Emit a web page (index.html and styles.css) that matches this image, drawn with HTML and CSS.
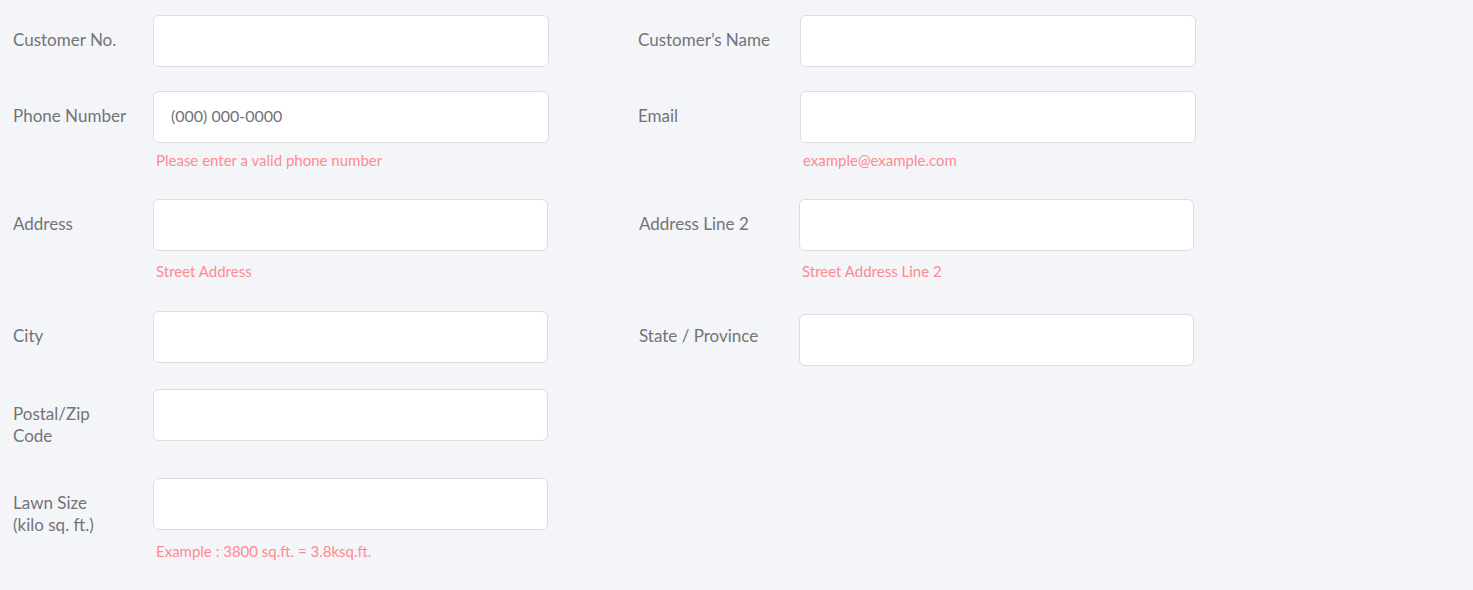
FILE: index.html
```html
<!DOCTYPE html>
<html lang="en">
<head>
<meta charset="utf-8">
<title>Customer Form</title>
<link rel="stylesheet" href="styles.css">
</head>
<body>
<form class="form">
  <div class="col col-left">
    <div class="field mb-24">
      <label class="label">Customer No.</label>
      <div class="control"><input class="input" type="text"></div>
    </div>
    <div class="field mb-30">
      <label class="label">Phone Number</label>
      <div class="control">
        <input class="input" type="text" placeholder="(000) 000-0000">
        <div class="helper h-8">Please enter a valid phone number</div>
      </div>
    </div>
    <div class="field mb-31 narrow">
      <label class="label">Address</label>
      <div class="control">
        <input class="input" type="text">
        <div class="helper h-11">Street Address</div>
      </div>
    </div>
    <div class="field mb-26 narrow">
      <label class="label">City</label>
      <div class="control"><input class="input" type="text"></div>
    </div>
    <div class="field mb-31 narrow">
      <label class="label">Postal/Zip<br>Code</label>
      <div class="control"><input class="input" type="text"></div>
    </div>
    <div class="field narrow">
      <label class="label">Lawn Size<br>(kilo sq. ft.)</label>
      <div class="control">
        <input class="input" type="text">
        <div class="helper h-12">Example : 3800 sq.ft. = 3.8ksq.ft.</div>
      </div>
    </div>
  </div>
  <div class="col col-right">
    <div class="field mb-24">
      <label class="label">Customer’s Name</label>
      <div class="control"><input class="input" type="text"></div>
    </div>
    <div class="field mb-30">
      <label class="label">Email</label>
      <div class="control">
        <input class="input" type="email">
        <div class="helper h-8">example@example.com</div>
      </div>
    </div>
    <div class="field mb-31 narrow shift">
      <label class="label">Address Line 2</label>
      <div class="control">
        <input class="input" type="text">
        <div class="helper h-11">Street Address Line 2</div>
      </div>
    </div>
    <div class="field narrow shift">
      <label class="label">State / Province</label>
      <div class="control drop"><input class="input" type="text"></div>
    </div>
  </div>
</form>
</body>
</html>
```

FILE: styles.css
```css
html, body {
  margin: 0;
  padding: 0;
  background: #f4f5f9;
}
body {
  font-family: "Lato", "Liberation Sans", sans-serif;
  color: #707075;
}
.form {
  display: flex;
  align-items: flex-start;
  padding: 15px 0 0 13px;
}
.col-left {
  width: 536px;
  margin-right: 89px;
}
.col-left .label { width: 140px; }
.col-right .label { width: 162px; }
.field {
  display: flex;
  align-items: flex-start;
}
.label {
  flex: none;
  padding-top: 14px;
  font-size: 17px;
  line-height: 22px;
  color: #737378;
}
.control {
  width: 396px;
  display: flex;
  flex-direction: column;
}
.narrow .control { width: 395px; }
.col-right .shift .label { padding-left: 1px; width: 160px; }
.drop { margin-top: 3px; }
.input {
  box-sizing: border-box;
  width: 100%;
  height: 52px;
  margin: 0;
  padding: 0 17px 3px;
  border: 1px solid #dcdde1;
  border-radius: 6px;
  background: #fff;
  font-family: inherit;
  font-size: 16px;
  color: #737378;
  outline: none;
}
.input::placeholder { color: #737378; opacity: 1; }
.helper {
  font-size: 15px;
  line-height: 18px;
  color: #ff8a8f;
  padding-left: 3px;
}
.h-8 { margin-top: 8px; }
.h-11 { margin-top: 11px; }
.h-12 { margin-top: 12px; }
.mb-24 { margin-bottom: 24px; }
.mb-26 { margin-bottom: 26px; }
.mb-30 { margin-bottom: 30px; }
.mb-31 { margin-bottom: 31px; }
```
